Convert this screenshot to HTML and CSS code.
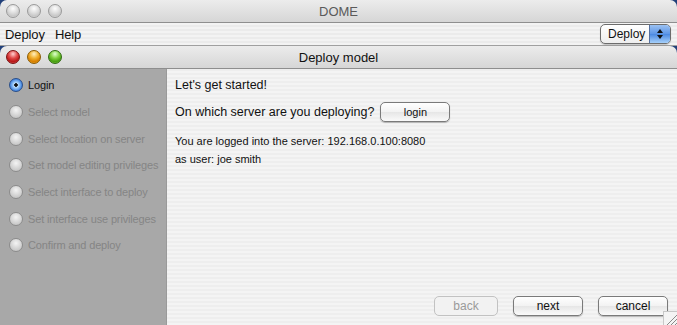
FILE: index.html
```html
<!DOCTYPE html>
<html lang="en">
<head>
    <meta charset="UTF-8">
    <meta name="viewport" content="width=device-width, initial-scale=1.0">
    <title>DOME - Deploy model</title>
    <link rel="stylesheet" href="styles.css">
</head>
<body>
    <div class="main-window">
        <div class="titlebar">
            <div class="lights">
                <span class="light"></span>
                <span class="light"></span>
                <span class="light"></span>
            </div>
            <div class="title-text inactive">DOME</div>
        </div>
        <div class="menubar">
            <span class="menu-item">Deploy</span>
            <span class="menu-item">Help</span>
            <div class="popup">
                <span class="popup-label">Deploy</span>
                <span class="popup-arrows">
                    <svg width="8" height="12" viewBox="0 0 8 12">
                        <path d="M4 1 L7 5 L1 5 Z" fill="#111"/>
                        <path d="M4 11 L7 7 L1 7 Z" fill="#111"/>
                    </svg>
                </span>
            </div>
        </div>
    </div>

    <div class="dialog">
        <div class="titlebar">
            <div class="lights">
                <span class="light red"></span>
                <span class="light amber"></span>
                <span class="light green"></span>
            </div>
            <div class="title-text">Deploy model</div>
        </div>
        <div class="dialog-body">
            <ul class="steps">
                <li class="step current"><span class="radio"></span>Login</li>
                <li class="step"><span class="radio"></span>Select model</li>
                <li class="step"><span class="radio"></span>Select location on server</li>
                <li class="step"><span class="radio"></span>Set model editing privileges</li>
                <li class="step"><span class="radio"></span>Select interface to deploy</li>
                <li class="step"><span class="radio"></span>Set interface use privileges</li>
                <li class="step"><span class="radio"></span>Confirm and deploy</li>
            </ul>
            <div class="panel">
                <p class="intro">Let's get started!</p>
                <div class="server-row">
                    <span>On which server are you deploying?</span>
                    <button class="btn login-btn">login</button>
                </div>
                <p class="status">You are logged into the server: 192.168.0.100:8080</p>
                <p class="status">as user: joe smith</p>
                <div class="actions">
                    <button class="btn back-btn" disabled>back</button>
                    <button class="btn">next</button>
                    <button class="btn">cancel</button>
                </div>
                <div class="grip">
                    <svg width="13" height="13" viewBox="0 0 13 13">
                        <path d="M13 2 L2 13 M13 6 L6 13 M13 10 L10 13" stroke="#8a8a8a" stroke-width="1"/>
                    </svg>
                </div>
            </div>
        </div>
    </div>
</body>
</html>
```

FILE: styles.css
```css
body {
    margin: 0;
    width: 677px;
    height: 325px;
    overflow: hidden;
    background-color: #21407a;
    font-family: "Liberation Sans", Arial, sans-serif;
    color: #111;
    display: flex;
    flex-direction: column;
}

.titlebar {
    height: 22px;
    display: flex;
    align-items: center;
    position: relative;
    border-radius: 7px 7px 0 0;
    background: linear-gradient(#ececec, #d6d6d6);
    border-bottom: 1px solid #8e8e8e;
}

.lights {
    display: flex;
    gap: 7px;
    padding-left: 6px;
}

.light {
    width: 14px;
    height: 14px;
    border-radius: 50%;
    box-sizing: border-box;
    border: 1px solid #9a9a9a;
    background: radial-gradient(circle at 50% 30%, #fdfdfd 0, #dcdcdc 45%, #c8c8c8 70%, #e8e8e8 100%);
}

.light.red {
    border-color: #7a1010;
    background: radial-gradient(circle at 50% 25%, #ffd0d0 0, #e04848 40%, #b81818 70%, #f07070 100%);
}

.light.amber {
    border-color: #8a5a00;
    background: radial-gradient(circle at 50% 25%, #fff0c0 0, #f0b030 40%, #d88000 70%, #ffc040 100%);
}

.light.green {
    border-color: #2e6a10;
    background: radial-gradient(circle at 50% 25%, #e0ffd0 0, #80d040 40%, #48a010 70%, #a0e060 100%);
}

.title-text {
    position: absolute;
    left: 0;
    right: 0;
    text-align: center;
    font-size: 13px;
    pointer-events: none;
}

.title-text.inactive {
    color: #5a5a5a;
}

.menubar {
    height: 22px;
    display: flex;
    align-items: center;
    padding: 0 6px 0 5px;
    gap: 10px;
    font-size: 13px;
    letter-spacing: -0.1px;
    border-bottom: 1px solid #a0a0a0;
    background: repeating-linear-gradient(#f3f3f3 0, #f3f3f3 2px, #ebebeb 2px, #ebebeb 4px);
}

.popup {
    margin-left: auto;
    width: 71px;
    height: 20px;
    box-sizing: border-box;
    border: 1px solid #6c6c6c;
    border-radius: 5px;
    display: flex;
    overflow: hidden;
    background: linear-gradient(#ffffff, #eeeeee);
    box-shadow: 0 1px 1px rgba(0, 0, 0, 0.2);
}

.popup-label {
    flex: 1;
    font-size: 12px;
    letter-spacing: 0;
    padding-left: 7px;
    line-height: 18px;
}

.popup-arrows {
    width: 20px;
    display: flex;
    align-items: center;
    justify-content: center;
    border-left: 1px solid #5570a0;
    background: linear-gradient(#9cc2f2, #5c95e6 50%, #4a88e0 51%, #a6d0fa);
}

.dialog {
    flex: 1;
    display: flex;
    flex-direction: column;
    min-height: 0;
}

.dialog-body {
    flex: 1;
    display: flex;
    min-height: 0;
}

.steps {
    list-style-type: none;
    margin: 0;
    padding: 3px 0 0 9px;
    width: 157px;
    background-color: #a8a8a8;
    border-right: 1px solid #9a9a9a;
    font-size: 11px;
    letter-spacing: -0.15px;
}

.step {
    height: 26.65px;
    display: flex;
    align-items: center;
    gap: 5px;
    color: #858585;
}

.step.current {
    color: #111;
}

.radio {
    width: 14px;
    height: 14px;
    box-sizing: border-box;
    border-radius: 50%;
    border: 1px solid #8c8c8c;
    background: radial-gradient(circle at 50% 35%, #f4f4f4 0, #d0d0d0 60%, #bcbcbc 100%);
}

.step.current .radio {
    border-color: #2a4f8a;
    background: radial-gradient(circle, #111 0, #111 1.5px, #bde0ff 2px, #5c9ae8 5px, #2c6ad0 7px);
}

.panel {
    flex: 1;
    position: relative;
    padding: 8px 8px 0 8px;
    display: flex;
    flex-direction: column;
    background: repeating-linear-gradient(#eeeeee 0, #eeeeee 2px, #f4f4f4 2px, #f4f4f4 4px);
}

.intro {
    margin: 0;
    font-size: 12.5px;
    line-height: 16px;
}

.server-row {
    margin-top: 9px;
    display: flex;
    align-items: center;
    gap: 6px;
    font-size: 12.5px;
}

.status {
    margin: 0;
    font-size: 11px;
    line-height: 18px;
}

.server-row + .status {
    margin-top: 10px;
}

.btn {
    height: 20px;
    min-width: 70px;
    padding: 0 12px;
    font-family: "Liberation Sans", Arial, sans-serif;
    font-size: 12px;
    color: #111;
    border: 1px solid #7a7a7a;
    border-radius: 5px;
    background: linear-gradient(#ffffff, #f2f2f2 50%, #e6e6e6 51%, #fafafa);
    box-shadow: 0 1px 1px rgba(0, 0, 0, 0.25);
}

.login-btn {
    font-size: 11px;
}

.back-btn:disabled {
    color: #9a9a9a;
    border-color: #c2c2c2;
    box-shadow: none;
    background: #f2f2f2;
    min-width: 64px;
}

.actions {
    margin-top: auto;
    margin-bottom: 9px;
    display: flex;
    justify-content: flex-end;
    gap: 15px;
    padding-right: 1px;
}

.grip {
    position: absolute;
    right: 0;
    bottom: 0;
    width: 13px;
    height: 13px;
    background-color: #f4f4f4;
    border-top: 1px solid #c8c8c8;
    border-left: 1px solid #c8c8c8;
}
```
